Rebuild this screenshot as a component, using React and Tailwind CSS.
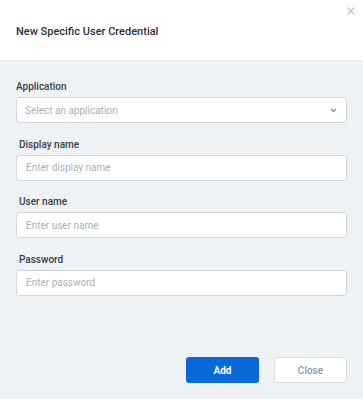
import React from "react";

function Field({ label, placeholder, indent }) {
  return (
    <div className="flex flex-col">
      <label className={`h-[14px] leading-[14px] text-[10px] font-medium text-[#383f47] ${indent ? "pl-[3px]" : ""}`}>
        {label}
      </label>
      <div className="mt-[3px] h-[26px] rounded-[3px] border border-[#d3d8de] bg-white flex items-center px-[9px]">
        <span className="text-[10px] text-[#aab1b9]">{placeholder}</span>
      </div>
    </div>
  );
}

export default function App() {
  return (
    <div className="w-[363px] h-[399px] flex flex-col bg-[#eef2f5]" style={{ fontFamily: "Roboto, 'Liberation Sans', sans-serif" }}>
      <div className="relative h-[61px] shrink-0 bg-white border-b border-[#e4e8ec] flex items-center px-4">
        <span className="text-[11px] font-medium text-[#2d333a] mt-[5px]">New Specific User Credential</span>
        <svg className="absolute right-[8px] top-[7px]" width="8" height="8" viewBox="0 0 8 8">
          <path d="M0.5 0.5 L7.5 7.5 M7.5 0.5 L0.5 7.5" stroke="#b6c2d0" strokeWidth="1.1" />
        </svg>
      </div>
      <div className="flex flex-col px-4 pt-[19px] gap-[14.5px]">
        <div className="flex flex-col">
          <label className="h-[14px] leading-[14px] text-[10px] font-medium text-[#383f47]">Application</label>
          <div className="mt-[3px] h-[26px] rounded-[3px] border border-[#d3d8de] bg-white flex items-center justify-between pl-[8px] pr-[9px]">
            <span className="text-[10px] text-[#aab1b9]">Select an application</span>
            <svg width="7" height="5" viewBox="0 0 7 5">
              <path d="M1 1 L3.5 3.5 L6 1" stroke="#7d8793" strokeWidth="1.2" fill="none" />
            </svg>
          </div>
        </div>
        <Field label="Display name" placeholder="Enter display name" indent />
        <Field label="User name" placeholder="Enter user name" indent />
        <Field label="Password" placeholder="Enter password" indent />
      </div>
      <div className="mt-auto mb-[16px] flex justify-end gap-[15px] pr-4">
        <button className="w-[73px] h-[26px] rounded-[3px] bg-[#0a69d9] text-white text-[10px] font-bold">Add</button>
        <button className="w-[73px] h-[26px] rounded-[3px] bg-white border border-[#d8dde3] text-[#8b97a5] text-[10px] font-medium">Close</button>
      </div>
    </div>
  );
}
